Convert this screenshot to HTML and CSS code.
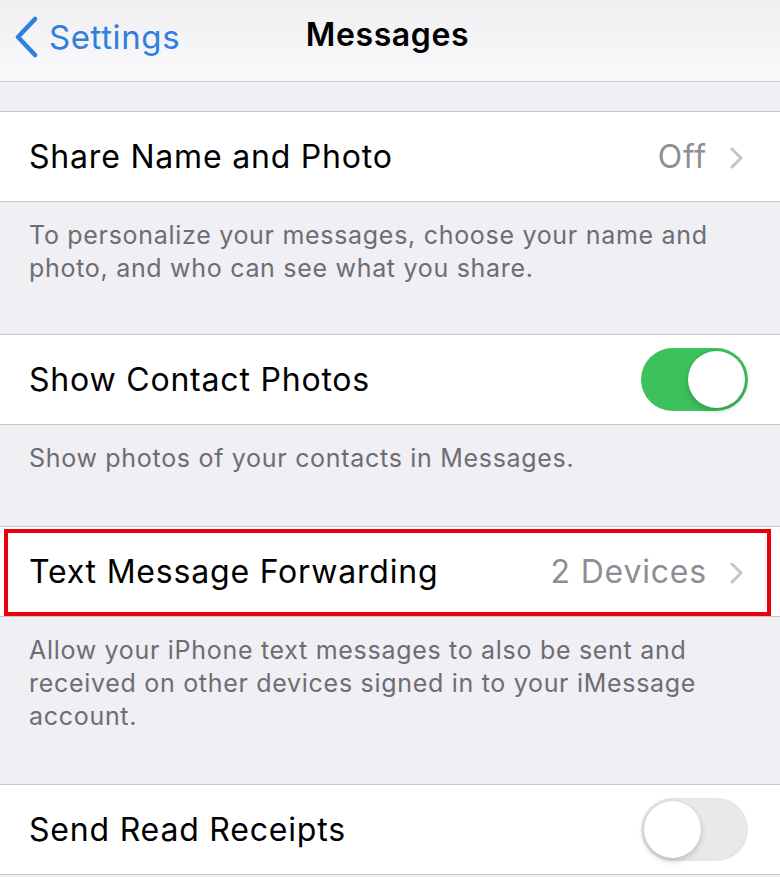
FILE: index.html
```html
<!DOCTYPE html>
<html>
<head>
<meta charset="utf-8">
<link rel="stylesheet" href="styles.css">
</head>
<body>
<div class="screen">
  <header class="nav">
    <div class="back">
      <svg class="back-chev" width="26" height="42" viewBox="0 0 26 42"><path d="M22 3 L5 21 L22 39" fill="none" stroke="#2f7fe0" stroke-width="4.5" stroke-linecap="round" stroke-linejoin="round"/></svg>
      <span class="back-label">Settings</span>
    </div>
    <div class="title">Messages</div>
  </header>
  <div class="gap-top"></div>

  <div class="row">
    <span class="label">Share Name and Photo</span>
    <span class="detail">Off<svg class="chev" width="14" height="22" viewBox="0 0 14 22"><path d="M2 2 L11 11 L2 20" fill="none" stroke="#c4c4c9" stroke-width="3" stroke-linecap="round" stroke-linejoin="round"/></svg></span>
  </div>
  <div class="footer f1">To personalize your messages, choose your name and photo, and who can see what you share.</div>

  <div class="row">
    <span class="label">Show Contact Photos</span>
    <span class="toggle on"><span class="knob"></span></span>
  </div>
  <div class="footer f2">Show photos of your contacts in Messages.</div>

  <div class="row highlight">
    <span class="label">Text Message Forwarding</span>
    <span class="detail">2 Devices<svg class="chev" width="14" height="22" viewBox="0 0 14 22"><path d="M2 2 L11 11 L2 20" fill="none" stroke="#c4c4c9" stroke-width="3" stroke-linecap="round" stroke-linejoin="round"/></svg></span>
  </div>
  <div class="footer f3">Allow your iPhone text messages to also be sent and received on other devices signed in to your iMessage account.</div>

  <div class="row">
    <span class="label">Send Read Receipts</span>
    <span class="toggle off"><span class="knob"></span></span>
  </div>
</div>
</body>
</html>
```

FILE: styles.css
```css
html, body {
  margin: 0;
  padding: 0;
  background: #efeff4;
}
.screen {
  width: 780px;
  height: 877px;
  overflow: hidden;
  font-family: "Inter", "Roboto", "Liberation Sans", sans-serif;
  background: #efeff4;
}
.nav {
  height: 81px;
  border-bottom: 1px solid #c8c8cc;
  background: linear-gradient(#efeff1, #fafafc);
  display: flex;
  align-items: center;
  position: relative;
}
.back {
  display: flex;
  align-items: center;
  padding-left: 13px;
  padding-bottom: 8px;
}
.back-chev {
  display: block;
}
.back-label {
  color: #2f7fe0;
  font-size: 33px;
  margin-left: 10px;
  letter-spacing: 0.6px;
}
.title {
  position: absolute;
  left: 0;
  right: 0;
  top: 15px;
  text-align: center;
  font-size: 32px;
  font-weight: 600;
  color: #000;
  letter-spacing: 0.6px;
  padding-right: 5px;
}
.gap-top {
  height: 29px;
  border-bottom: 1px solid #c8c8cc;
}
.row {
  height: 90px;
  background: #fff;
  display: flex;
  align-items: center;
  justify-content: space-between;
  padding: 0 36px 0 29px;
  border-bottom: 1px solid #c8c8cc;
  box-sizing: border-box;
}
.footer + .row {
  border-top: 1px solid #c8c8cc;
  height: 91px;
}
.label {
  font-size: 32px;
  color: #000;
  letter-spacing: 0.8px;
}
.detail {
  font-size: 32px;
  color: #8e8e93;
  display: flex;
  align-items: center;
  letter-spacing: 0.8px;
}
.chev {
  margin-left: 23px;
  margin-top: 2px;
}
.footer {
  color: #6d6d72;
  font-size: 25px;
  line-height: 33px;
  padding: 17px 40px 0 29px;
  box-sizing: border-box;
  letter-spacing: 0.7px;
}
.f1 { height: 132px; }
.f2 { height: 101px; }
.f3 { height: 167px; }
.highlight {
  position: relative;
}
.highlight::after {
  content: "";
  position: absolute;
  left: 4px;
  right: 9px;
  top: 2px;
  bottom: 0px;
  border: 4px solid #e8000b;
  pointer-events: none;
}
.toggle {
  width: 107px;
  height: 63px;
  border-radius: 32px;
  position: relative;
  box-sizing: border-box;
  margin-right: -4px;
}
.toggle.on {
  background: #3cc15c;
}
.toggle.off {
  background: #e9e9eb;
  border: 2px solid #e6e6e8;
}
.knob {
  position: absolute;
  width: 57px;
  height: 57px;
  border-radius: 50%;
  background: #fff;
  top: 3px;
  box-shadow: 0 3px 6px rgba(0,0,0,0.18), 0 0 1px rgba(0,0,0,0.2);
}
.toggle.on .knob { right: 3px; }
.toggle.off .knob { left: 1px; top: 1px; }
```
